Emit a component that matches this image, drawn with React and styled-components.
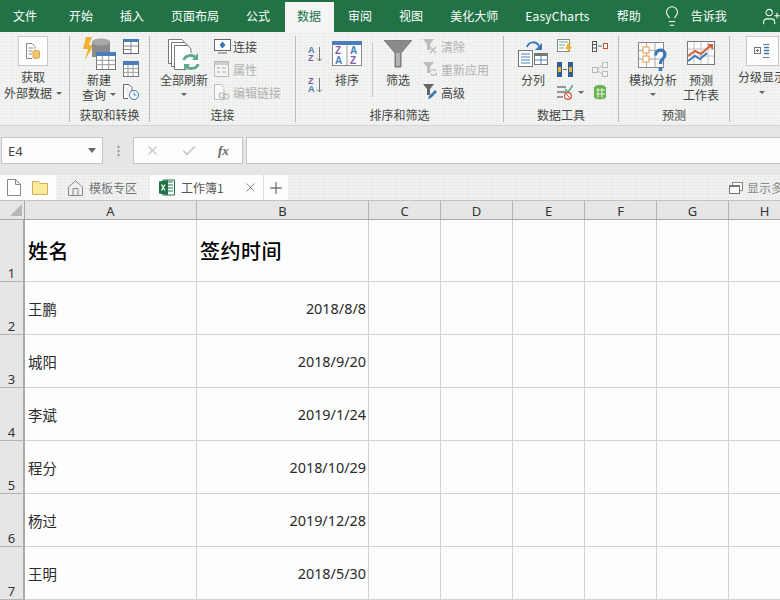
import React from 'react';
import styled, { createGlobalStyle } from 'styled-components';
import { Lightbulb, UserPlus, X, Check, Plus } from 'lucide-react';

const FONT = '"Noto Sans CJK SC", "Noto Sans", "Liberation Sans", sans-serif';

const Global = createGlobalStyle`
  html, body { margin: 0; padding: 0; background: #fdfdfd; }
  #root { width: 780px; height: 600px; overflow: hidden; }
`;

const Page = styled.div`
  width: 780px; height: 600px; overflow: hidden;
  font-family: ${FONT}; font-size: 12px; color: #333; display: flex; flex-direction: column;
`;

/* ---------- title tabs ---------- */
const TabBar = styled.div`
  height: 32px; background: #217346; display: flex; align-items: flex-end; gap: 3px; padding-left: 1px; flex: none;
`;
const MenuTab = styled.div`
  height: 30px; line-height: 28px; padding: 0 12px; color: #fff; white-space: nowrap; font-size: 12px;
  ${p => p.$active && 'background:#f4f5f4; color:#217346; padding:0 13px 0 12px; margin-right:-1px;'}
`;
const FileTab = styled(MenuTab)`margin-right: 5px;`;
const LatinTab = styled(MenuTab)`letter-spacing: 0.25px;`;
const BarIcon = styled.div`
  height: 30px; display: flex; align-items: center; color: #fff; flex: none; padding-bottom: 2px; box-sizing: border-box;
  margin-left: ${p => p.$ml || 0}px; margin-right: ${p => p.$mr || 0}px;
`;

/* ---------- ribbon ---------- */
const Ribbon = styled.div`
  height: 94px; flex: none; display: flex; padding-top: 4px; box-sizing: border-box; overflow: hidden;
  background-color: #f3f4f3;
  background-image: radial-gradient(#e6ebe6 0.9px, transparent 1.1px);
  background-size: 3px 3px;
  border-bottom: 1px solid #d4d4d4;
`;
const Group = styled.section`
  width: ${p => p.$w}px; height: 86px; box-sizing: border-box; flex: none;
  border-right: 1px solid #b9bcb9; display: flex; flex-direction: column;
`;
const GroupBody = styled.div`
  height: 70px; display: flex; gap: ${p => p.$gap ?? 0}px; padding-left: ${p => p.$pl ?? 0}px;
`;
const GroupLabel = styled.div`
  height: 16px; line-height: 18px; text-align: center; color: #444; white-space: nowrap;
`;
const LargeButton = styled.div`
  width: ${p => p.$w}px; flex: none; display: flex; flex-direction: column; align-items: center;
`;
const IconSlot = styled.div`
  height: ${p => p.$h ?? 35}px; display: flex; align-items: ${p => p.$top ? 'flex-start' : 'flex-end'}; justify-content: center; flex: none;
  padding-bottom: ${p => p.$pb ?? 0}px; box-sizing: border-box;
`;
const BtnText = styled.div`
  line-height: ${p => p.$lh ?? 15}px; white-space: nowrap; color: #444; text-align: center; display: flex; align-items: center; justify-content: center; gap: 4px;
`;
const Caret = styled.span`
  display: inline-block; width: 0; height: 0; border-left: 3px solid transparent; border-right: 3px solid transparent;
  border-top: 3px solid #666; flex: none;
`;
const CaretLine = styled.div`
  height: 15px; display: flex; align-items: center; justify-content: center;
`;
const IconBox = styled.div`
  width: ${p => p.$w}px; height: 30px; box-sizing: border-box; background: #fdfdfd; border: 1px solid #c9c9c9;
  display: flex; align-items: center; justify-content: center;
`;
const SmallCol = styled.div`
  display: flex; flex-direction: column; gap: 3px; flex: none; width: ${p => p.$w ? p.$w + 'px' : 'auto'}; margin-left: ${p => p.$ml ?? 0}px;
`;
const SmallRow = styled.div`
  height: 20px; display: flex; align-items: center; gap: ${p => p.$gap ?? 1}px; white-space: nowrap;
  color: ${p => p.$off ? '#b2b2b2' : '#444'};
`;
const SortStack = styled.div`
  width: 15px; flex: none; display: flex; flex-direction: column; padding-top: 10px; gap: 15px;
`;
const VDivider = styled.div`
  width: 1px; height: 55px; background: #c8c8c8; margin: 6px 1px 0; flex: none;
`;

/* ---------- formula bar ---------- */
const FormulaBar = styled.div`
  height: 49px; flex: none; background: #e6e6e6; display: flex; align-items: center; box-sizing: border-box; padding-left: 1px;
`;
const NameBox = styled.div`
  width: 102px; height: 27px; box-sizing: border-box; border: 1px solid #c6c6c6; background: #fdfdfd; display: flex; align-items: center;
  justify-content: space-between; padding: 0 6px; font-family: "Noto Sans", sans-serif; font-size: 13px; color: #444; flex: none;
`;
const NameCaret = styled.span`
  width: 0; height: 0; border-left: 4px solid transparent; border-right: 4px solid transparent; border-top: 5px solid #666;
`;
const Grip = styled.div`
  width: 3px; height: 12px; margin: 0 13px 0 14px; flex: none;
  background-image: radial-gradient(#a4a4a4 1px, transparent 1.2px); background-size: 3px 4px;
`;
const FxBox = styled.div`
  width: 110px; height: 27px; box-sizing: border-box; border: 1px solid #c6c6c6; background: #fdfdfd; display: flex; align-items: center;
  gap: 21px; padding-left: 11px; flex: none; color: #c4c4c4;
`;
const Fx = styled.span`
  font-family: "Liberation Serif", serif; font-style: italic; font-weight: bold; font-size: 13px; color: #666;
`;
const FormulaInput = styled.div`
  flex: 1; height: 27px; box-sizing: border-box; border: 1px solid #c6c6c6; border-right: 0; background: #fdfdfd; margin-left: 3px;
`;

/* ---------- doc tabs ---------- */
const DocBar = styled.div`
  height: 25px; flex: none; display: flex; align-items: stretch; overflow: hidden; 
  background-color: #f1f2f1;
  background-image: radial-gradient(#e4e9e4 0.9px, transparent 1.1px);
  background-size: 3px 3px;
`;
const DocTools = styled.div`
  width: 56px; background: #fdfdfd; display: flex; align-items: center; gap: 11px; padding-left: 7px; box-sizing: border-box; flex: none;
`;
const DocTab = styled.div`
  width: ${p => p.$w}px; box-sizing: border-box; flex: none; display: flex; align-items: center; white-space: nowrap;
  padding-left: ${p => p.$pl}px; gap: 6px; color: ${p => p.$active ? '#555' : '#777'};
  background: ${p => p.$active ? '#fdfdfd' : 'transparent'};
`;
const TabClose = styled.div`
  margin-left: auto; margin-right: 5px; display: flex; color: #666;
`;
const AddTab = styled.div`
  width: 25px; flex: none; background: #fdfdfd; border-left: 1px solid #dcdcdc; box-sizing: border-box; display: flex; align-items: center; justify-content: center; color: #777;
`;
const MultiWindow = styled.div`
  margin-left: 441px; flex: none; display: flex; align-items: center; gap: 4px; color: #888; white-space: nowrap;
`;

/* ---------- sheet ---------- */
const Sheet = styled.div`
  display: grid; flex: none; background: #fdfdfd;
  grid-template-columns: 25px 172px 172px 72px 72px 72px 72px 72px 72px;
  grid-template-rows: 20px 62px repeat(6, 53px);
`;
const ColHead = styled.div`
  background: #e6e6e6; box-sizing: border-box; border-top: 1px solid #c4c4c4; border-bottom: 1px solid #a8a8a8; border-right: 1px solid #b4b4b4;
  display: flex; align-items: center; justify-content: center; padding-top: 1px; font-family: "Noto Sans", sans-serif; font-size: 13px; color: #333;
`;
const Corner = styled(ColHead)`
  justify-content: flex-end; padding: 0 2px 0 0; border-right: 1px solid #a8a8a8;
`;
const CornerMark = styled.span`
  width: 0; height: 0; border-left: 12px solid transparent; border-bottom: 12px solid #b7b7b7;
`;
const RowHead = styled.div`
  background: #e6e6e6; box-sizing: border-box; border-bottom: 1px solid #b4b4b4; border-right: 2px solid #a8a8a8;
  display: flex; align-items: flex-end; justify-content: center; font-family: "Noto Sans", sans-serif; font-size: 13px; color: #333; line-height: 15px;
`;
const Cell = styled.div`
  box-sizing: border-box; border-right: 1px solid #d2d2d2; border-bottom: 1px solid #d2d2d2; display: flex; align-items: center;
  padding: 1px 2px 0 3px; font-size: 14.4px; color: #2a2a2a; white-space: nowrap; overflow: hidden;
  justify-content: ${p => p.$right ? 'flex-end' : 'flex-start'};
  font-family: "Noto Sans", "Noto Sans CJK SC", sans-serif;
`;
const HeadCell = styled(Cell)`
  font-family: "Noto Sans CJK SC", sans-serif; font-size: 20px; font-weight: 500; color: #000; letter-spacing: 0.5px; padding: 0 2px 1px 3px;
`;

/* ---------- drawings ---------- */
const S = ({ w, h, children }) => <svg width={w} height={h} viewBox={`0 0 ${w} ${h}`} fill="none" style={{ display: 'block', flex: 'none' }}>{children}</svg>;

const TableIco = ({ x, y, w, h, head = '#4a7ebb' }) => (
  <g>
    <rect x={x + .5} y={y + .5} width={w} height={h} fill="#fff" stroke="#777" />
    <rect x={x} y={y} width={w + 1} height={4} fill={head} />
    {[1, 2].map(i => <path key={i} d={`M${x + i * w / 3} ${y + 4}V${y + h}`} stroke="#999" />)}
    {[1, 2].map(i => <path key={i} d={`M${x} ${y + 4 + i * (h - 4) / 3}H${x + w}`} stroke="#999" />)}
  </g>
);

const ExternalData = () => (
  <S w={14} h={16}>
    <path d="M.5.5H6L9 3.5V6M.5.5V15.5H6" stroke="#888" fill="#fff" />
    <path d="M2.5 5H7M2.5 8H6M2.5 11H6" stroke="#888" />
    <path d="M7 8.5C7 7 13.5 7 13.5 8.5V14.5C13.5 16 7 16 7 14.5Z" fill="#f4c573" stroke="#d9a441" />
  </S>
);
const NewQuery = () => (
  <S w={33} h={33}>
    <path d="M9 0H3L0 12H5L2 23L11 8H6Z" fill="#f2b134" />
    <path d="M9 5C9 1 27 1 27 5V20H9Z" fill="#8b8b8b" />
    <ellipse cx="18" cy="5" rx="9" ry="3.5" fill="#a9a9a9" />
    <TableIco x={13} y={15} w={19} h={17} />
  </S>
);
const SheetSmall = () => (
  <S w={16} h={15}><rect x=".5" y=".5" width="15" height="14" fill="#fff" stroke="#666" /><rect width="16" height="3" fill="#4a7ebb" /><path d="M8 3V14M1 7H15M1 10.5H8" stroke="#888" /></S>
);
const GridSmall = () => (
  <S w={16} h={16}><TableIco x={0} y={0} w={15} h={15} /></S>
);
const ClockDoc = () => (
  <S w={16} h={16}><path d="M.5.5H6L9 3.5V7M.5.5V14.5H5" stroke="#666" fill="#fff" /><circle cx="11" cy="11" r="4.5" fill="#fff" stroke="#3c78b5" /><path d="M11 8.5V11H13.5" stroke="#3c78b5" /></S>
);
const RefreshAll = () => (
  <S w={33} h={33}>
    {[0, 3, 6].map(d => <path key={d} d={`M${d + .5} ${d + 24.5}V${d + .5}H${d + 14}L${d + 17} ${d + 4}V${d + 24.5}Z`} fill="#fff" stroke="#777" />)}
    <circle cx="23" cy="23" r="9" fill="#fdfdfd" />
    <path d="M16 21C17 16 25 15 28 19M30 25C29 30 21 31 18 27" stroke="#5da88a" strokeWidth="3" />
    <path d="M30 14V21H24ZM16 32V25H22Z" fill="#5da88a" />
  </S>
);
const ConnectIco = () => (
  <S w={18} h={15}><rect x=".5" y=".5" width="16" height="11" fill="#fff" stroke="#666" /><path d="M8.5 2.5L11.5 6L8.5 9.5L5.5 6Z" fill="#3c78b5" /><path d="M4 14H13" stroke="#666" /></S>
);
const PropIco = () => (
  <S w={16} h={16}><rect x=".5" y=".5" width="14" height="15" fill="#f4f4f4" stroke="#bbb" /><rect x="1" y="1" width="13" height="3" fill="#ccc" /><path d="M3 7H6M3 11H6M8 7H12M8 11H12" stroke="#aaa" /></S>
);
const LinkIco = () => (
  <S w={16} h={16}><path d="M.5.5H7L10 3.5V15.5H.5Z" fill="#fafafa" stroke="#bbb" /><rect x="5" y="9" width="6" height="5" rx="2.5" stroke="#aaa" fill="#f4f4f4" /><rect x="9" y="10" width="6" height="5" rx="2.5" stroke="#aaa" /></S>
);
const Letter = ({ x, y, c, s = 9 }) => <text x={x} y={y} fill={c} fontSize={s} fontWeight="bold" fontFamily="Liberation Sans, sans-serif">{c === '#8059a8' ? 'Z' : 'A'}</text>;
const SortAZ = ({ zFirst }) => (
  <S w={16} h={16}>
    {zFirst
      ? <><Letter x={0} y={7} c="#8059a8" /><Letter x={0} y={15} c="#4a7ebb" /></>
      : <><Letter x={0} y={7} c="#4a7ebb" /><Letter x={0} y={15} c="#8059a8" /></>}
    <path d="M11.5 1V15M9 12.5L11.5 15L14 12.5" stroke="#777" />
  </S>
);
const SortBig = () => (
  <S w={30} h={25}>
    <rect x=".5" y=".5" width="29" height="24" fill="#fff" stroke="#888" />
    <rect width="30" height="4" fill="#4a7ebb" />
    <path d="M15 4V24" stroke="#999" />
    <Letter x={3} y={13} c="#8059a8" s={10} /><Letter x={18} y={13} c="#4a7ebb" s={10} />
    <Letter x={3} y={23} c="#4a7ebb" s={10} /><Letter x={18} y={23} c="#8059a8" s={10} />
  </S>
);
const Funnel = () => (
  <S w={28} h={28}><path d="M0 0H28L17 13V27H11V13Z" fill="#8a8a8a" stroke="#777" /><path d="M13 13V26M15 13V26" stroke="#ddd" /></S>
);
const MiniFunnel = ({ c }) => <path d="M0 0H11L7 5V11H4V5Z" fill={c} />;
const ClearIco = () => (<S w={15} h={15}><MiniFunnel c="#bcbcbc" /><path d="M7 8L13 14M13 8L7 14" stroke="#bbb" strokeWidth="1.4" /></S>);
const ReapplyIco = () => (<S w={15} h={15}><MiniFunnel c="#bcbcbc" /><path d="M7 10C8 7 12 7 13 9M14 11C13 14 9 14 8 12" stroke="#bbb" strokeWidth="1.4" /></S>);
const AdvancedIco = () => (<S w={15} h={16}><MiniFunnel c="#666" /><path d="M5 15L6 12L12 6L14 8L8 14Z" fill="#3c78b5" /></S>);
const SplitIco = () => (
  <S w={30} h={26}>
    <path d="M9 6C11 0 18 0 21 5" stroke="#3c78b5" strokeWidth="2" /><path d="M24 2V9H17Z" fill="#3c78b5" />
    <rect x=".5" y="9.5" width="14" height="16" fill="#fff" stroke="#777" /><path d="M3 13H12M3 16H12M3 19H12M3 22H12" stroke="#4a7ebb" />
    <rect x="16.5" y="12.5" width="13" height="11" fill="#fff" stroke="#777" /><rect x="16" y="12" width="14" height="3" fill="#777" /><path d="M23 15V23M17 19H29" stroke="#4a7ebb" />
  </S>
);
const FlashIco = () => (
  <S w={16} h={15}><rect x=".5" y=".5" width="12" height="12" fill="#fff" stroke="#888" /><path d="M2 3H11M2 6H8M2 9H7" stroke="#6aa58a" /><path d="M11 4L8 10H11L9 15L15 8H12L14 4Z" fill="#f2b134" /></S>
);
const DupIco = () => (
  <S w={16} h={15}><rect x="0" y="0" width="5" height="15" fill="#2f5f94" /><rect x="1" y="5" width="3" height="5" fill="#f2b134" /><rect x="11" y="0" width="5" height="15" fill="#2f5f94" /><rect x="12" y="5" width="3" height="5" fill="#f2b134" /><path d="M6 7.5H10" stroke="#3c78b5" /></S>
);
const ValidIco = () => (
  <S w={16} h={16}><path d="M0 3H9M0 8H9M0 13H6" stroke="#777" strokeWidth="1.5" /><path d="M8 5L11 8L16 1" stroke="#5da88a" strokeWidth="1.6" /><circle cx="11" cy="12" r="3.4" fill="#fff" stroke="#d0503c" strokeWidth="1.2" /><path d="M9 10L13 14" stroke="#d0503c" /></S>
);
const MergeIco = () => (
  <S w={16} h={11}><rect x=".5" y=".5" width="4" height="10" fill="#fff" stroke="#555" /><path d="M1 3.5H4M1 7H4" stroke="#555" /><rect x="11.5" y="2.5" width="4" height="5" fill="#fff" stroke="#c0502e" /><path d="M6 5H10" stroke="#3c78b5" /></S>
);
const RelIco = () => (
  <S w={16} h={15}><rect x=".5" y="5.5" width="5" height="5" stroke="#bbb" fill="#f4f4f4" /><rect x="10.5" y=".5" width="5" height="5" stroke="#bbb" fill="#f4f4f4" /><rect x="10.5" y="9.5" width="5" height="5" stroke="#bbb" fill="#f4f4f4" /><path d="M6 7L10 4M6 9L10 12" stroke="#bbb" /></S>
);
const ModelIco = () => (
  <S w={16} h={16}><path d="M2 4C2 0 14 0 14 4V13C14 16 2 16 2 13Z" fill="#6ab04c" /><path d="M4 6H13M4 10H13M6 4V14M10 4V14" stroke="#e6f2e0" /></S>
);
const WhatIf = () => (
  <S w={30} h={30}>
    <rect x=".5" y=".5" width="25" height="25" fill="#fbfbfb" stroke="#888" />
    <path d="M8.5 1V25M17 1V25M1 8.5H25M1 17H25" stroke="#aaa" />
    <rect x="5" y="5" width="6" height="6" fill="#fff" stroke="#e59a4a" /><rect x="5" y="14" width="6" height="6" fill="#fff" stroke="#e59a4a" />
    <path d="M17.5 13.5C18 6.5 27 6.5 27 12.5C27 17 22.5 16.5 22.5 22" stroke="#3c78b5" strokeWidth="3.2" fill="none" />
    <rect x="20.7" y="25" width="3.6" height="4" fill="#3c78b5" />
  </S>
);
const ForecastIco = () => (
  <S w={28} h={26}>
    <rect x=".5" y=".5" width="27" height="23" fill="#fbfbfb" stroke="#777" />
    <path d="M7 1V23M14 1V23M21 1V23M1 8H27M1 15H27" stroke="#c4c4c4" />
    <path d="M1 20L8 15L13 18L20 12" stroke="#3c78b5" strokeWidth="2" />
    <path d="M1 15L8 10L14 13L24 4" stroke="#d0603c" strokeWidth="2" /><path d="M20 3H26V9Z" fill="#d0603c" />
  </S>
);
const OutlineIco = () => (
  <S w={16} h={14}><rect x=".5" y="3.5" width="6" height="6" stroke="#777" fill="#fff" /><path d="M2 6.5H5M3.5 5V8" stroke="#777" /><path d="M9 .5H15.5M9 13.5H15.5" stroke="#777" /><path d="M10 3.5H15M10 6.5H15M10 9.5H15" stroke="#3c78b5" strokeWidth="1.4" /></S>
);
const FileIco = () => (<S w={14} h={17}><path d="M.5.5H8.5L13.5 5.5V16.5H.5Z" fill="#fff" stroke="#888" /><path d="M8.5.5V5.5H13.5" stroke="#888" /></S>);
const FolderIco = () => (<S w={16} h={14}><path d="M.5 13.5V.5H6.5L8 2.5H15.5V13.5Z" fill="#fbe99c" stroke="#cfae5a" /></S>);
const HomeIco = () => (<S w={15} h={16}><path d="M.5 7L7.5 .8L14.5 7V15.5H.5Z" stroke="#888" fill="none" /><path d="M5 15V8.5H10V15" stroke="#888" /></S>);
const ExcelIco = () => (
  <S w={16} h={17}>
    <path d="M4 1H15.5V16H4Z" fill="#fff" stroke="#217346" /><path d="M9 3H14M9 6H14M9 9H14M9 12H14" stroke="#217346" />
    <path d="M0 2.5L9 1V16L0 14.5Z" fill="#217346" />
    <path d="M2.5 5.5L6 11.5M6 5.5L2.5 11.5" stroke="#fff" strokeWidth="1.3" />
  </S>
);
const WindowsIco = () => (<S w={14} h={12}><rect x="3.5" y=".5" width="10" height="8" stroke="#888" fill="#fdfdfd" /><rect x=".5" y="3.5" width="10" height="8" stroke="#777" fill="#fdfdfd" /><path d="M1 4H10" stroke="#777" strokeWidth="2" /></S>);

const tabs = ['开始', '插入', '页面布局', '公式'];
const tabs2 = ['审阅', '视图', '美化大师'];
const columns = ['A', 'B', 'C', 'D', 'E', 'F', 'G', 'H'];
const rows = [
  ['王鹏', '2018/8/8'], ['城阳', '2018/9/20'], ['李斌', '2019/1/24'],
  ['程分', '2018/10/29'], ['杨过', '2019/12/28'], ['王明', '2018/5/30'],
];

export default function App() {
  return (
    <Page>
      <Global />
      <TabBar>
        <FileTab>文件</FileTab>
        {tabs.map(t => <MenuTab key={t}>{t}</MenuTab>)}
        <MenuTab $active>数据</MenuTab>
        {tabs2.map(t => <MenuTab key={t}>{t}</MenuTab>)}
        <LatinTab>EasyCharts</LatinTab>
        <MenuTab>帮助</MenuTab>
        <BarIcon $ml={5} $mr={-7}><Lightbulb size={22} strokeWidth={1.1} /></BarIcon>
        <MenuTab>告诉我</MenuTab>
        <BarIcon $ml={20}><UserPlus size={19} strokeWidth={1.3} /></BarIcon>
      </TabBar>

      <Ribbon>
        <Group $w={70}>
          <GroupBody $pl={3}>
            <LargeButton $w={60}>
              <IconSlot $h={33} $top><IconBox $w={30}><ExternalData /></IconBox></IconSlot>
              <BtnText $lh={16}>获取</BtnText>
              <BtnText $lh={16}>外部数据<Caret /></BtnText>
            </LargeButton>
          </GroupBody>
          <GroupLabel />
        </Group>

        <Group $w={80}>
          <GroupBody $pl={12} $gap={7}>
            <LargeButton $w={34}>
              <IconSlot $h={36} $pb={2}><NewQuery /></IconSlot>
              <BtnText>新建</BtnText>
              <BtnText>查询<Caret /></BtnText>
            </LargeButton>
            <SmallCol>
              <SmallRow><SheetSmall /></SmallRow>
              <SmallRow><GridSmall /></SmallRow>
              <SmallRow><ClockDoc /></SmallRow>
            </SmallCol>
          </GroupBody>
          <GroupLabel>获取和转换</GroupLabel>
        </Group>

        <Group $w={146}>
          <GroupBody $pl={10} $gap={6}>
            <LargeButton $w={48}>
              <IconSlot $h={36}><RefreshAll /></IconSlot>
              <BtnText>全部刷新</BtnText>
              <CaretLine><Caret /></CaretLine>
            </LargeButton>
            <SmallCol>
              <SmallRow><ConnectIco />连接</SmallRow>
              <SmallRow $off $gap={3}><PropIco />属性</SmallRow>
              <SmallRow $off $gap={3}><LinkIco />编辑链接</SmallRow>
            </SmallCol>
          </GroupBody>
          <GroupLabel>连接</GroupLabel>
        </Group>

        <Group $w={208}>
          <GroupBody $pl={12} $gap={9}>
            <SortStack><SortAZ /><SortAZ zFirst /></SortStack>
            <LargeButton $w={30}>
              <IconSlot $h={36} $pb={6}><SortBig /></IconSlot>
              <BtnText>排序</BtnText>
            </LargeButton>
            <VDivider />
            <LargeButton $w={30}>
              <IconSlot $h={36} $pb={4}><Funnel /></IconSlot>
              <BtnText>筛选</BtnText>
            </LargeButton>
            <SmallCol $ml={1}>
              <SmallRow $off $gap={3}><ClearIco />清除</SmallRow>
              <SmallRow $off $gap={3}><ReapplyIco />重新应用</SmallRow>
              <SmallRow $gap={3}><AdvancedIco />高级</SmallRow>
            </SmallCol>
          </GroupBody>
          <GroupLabel>排序和筛选</GroupLabel>
        </Group>

        <Group $w={115}>
          <GroupBody $pl={14} $gap={9}>
            <LargeButton $w={30}>
              <IconSlot $h={36} $pb={5}><SplitIco /></IconSlot>
              <BtnText>分列</BtnText>
            </LargeButton>
            <SmallCol $w={26}>
              <SmallRow><FlashIco /></SmallRow>
              <SmallRow><DupIco /></SmallRow>
              <SmallRow $gap={5}><ValidIco /><Caret /></SmallRow>
            </SmallCol>
            <SmallCol>
              <SmallRow><MergeIco /></SmallRow>
              <SmallRow><RelIco /></SmallRow>
              <SmallRow><ModelIco /></SmallRow>
            </SmallCol>
          </GroupBody>
          <GroupLabel>数据工具</GroupLabel>
        </Group>

        <Group $w={111}>
          <GroupBody $pl={10} $gap={6}>
            <LargeButton $w={48}>
              <IconSlot $h={36}><WhatIf /></IconSlot>
              <BtnText>模拟分析</BtnText>
              <CaretLine><Caret /></CaretLine>
            </LargeButton>
            <LargeButton $w={36}>
              <IconSlot $h={36} $pb={5}><ForecastIco /></IconSlot>
              <BtnText>预测</BtnText>
              <BtnText>工作表</BtnText>
            </LargeButton>
          </GroupBody>
          <GroupLabel>预测</GroupLabel>
        </Group>

        <Group $w={60}>
          <GroupBody $pl={8}>
            <LargeButton $w={48}>
              <IconSlot $h={33} $top><IconBox $w={33}><OutlineIco /></IconBox></IconSlot>
              <BtnText $lh={16}>分级显示</BtnText>
              <CaretLine><Caret /></CaretLine>
            </LargeButton>
          </GroupBody>
        </Group>
      </Ribbon>

      <FormulaBar>
        <NameBox>E4<NameCaret /></NameBox>
        <Grip />
        <FxBox>
          <X size={15} strokeWidth={1.8} />
          <Check size={16} strokeWidth={2.4} />
          <Fx>fx</Fx>
        </FxBox>
        <FormulaInput />
      </FormulaBar>

      <DocBar>
        <DocTools><FileIco /><FolderIco /></DocTools>
        <DocTab $w={94} $pl={12}><HomeIco />模板专区</DocTab>
        <DocTab $w={113} $pl={9} $active>
          <ExcelIco />工作簿1
          <TabClose><X size={15} strokeWidth={1.2} /></TabClose>
        </DocTab>
        <AddTab><Plus size={18} strokeWidth={1.8} /></AddTab>
        <MultiWindow><WindowsIco />显示多窗口</MultiWindow>
      </DocBar>

      <Sheet>
        <Corner><CornerMark /></Corner>
        {columns.map(c => <ColHead key={c}>{c}</ColHead>)}
        <RowHead>1</RowHead>
        <HeadCell>姓名</HeadCell>
        <HeadCell>签约时间</HeadCell>
        {columns.slice(2).map(c => <Cell key={c} />)}
        {rows.map(([name, date], i) => (
          <React.Fragment key={name}>
            <RowHead>{i + 2}</RowHead>
            <Cell>{name}</Cell>
            <Cell $right>{date}</Cell>
            {columns.slice(2).map(c => <Cell key={c} />)}
          </React.Fragment>
        ))}
      </Sheet>
    </Page>
  );
}
